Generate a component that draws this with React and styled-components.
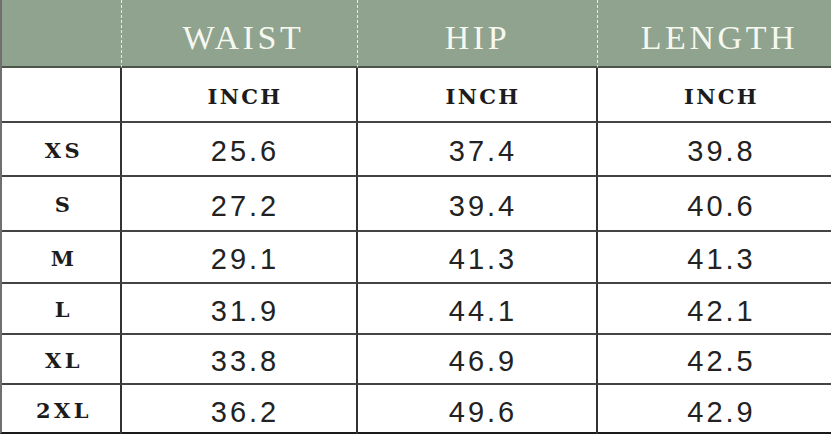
import React from "react";
import styled, { createGlobalStyle } from "styled-components";

const Global = createGlobalStyle`
  html, body { margin: 0; padding: 0; background: #ffffff; }
  body { width: 831px; height: 434px; overflow: hidden; }
`;

const Table = styled.div`
  display: grid;
  grid-template-columns: 120px 236px 240px 235px;
  grid-template-rows: 68px 55px 54px 55px 52px 51px 50px 49px;
  width: 831px;
  height: 434px;
  box-sizing: border-box;
  border-left: 2px solid #707070;
  border-bottom: 2px solid #1a1a1a;
`;

const HeadCell = styled.div`
  background: #8fa38e;
  display: flex;
  align-items: center;
  justify-content: center;
  padding-left: ${(p) => p.$shift || 0}px;
  box-sizing: border-box;
  border-bottom: 2px solid #4a5548;
  border-right: ${(p) => (p.$last ? "none" : "1px dashed rgba(255,255,255,0.8)")};
  color: #f6f8f0;
  font-family: "Liberation Serif", "Times New Roman", serif;
  font-size: 34px;
  letter-spacing: 3.6px;
  padding-top: 10px;
`;

const Cell = styled.div`
  display: flex;
  align-items: center;
  justify-content: center;
  box-sizing: border-box;
  border-right: ${(p) => (p.$last ? "none" : "2px solid #333")};
  border-bottom: ${(p) => (p.$noBottom ? "none" : "2px solid #444")};
  color: #1c1c1c;
`;

const Unit = styled(Cell)`
  font-family: "DejaVu Serif", "Liberation Serif", serif;
  font-weight: bold;
  font-size: 21px;
  letter-spacing: 2.4px;
  padding-top: 3px;
  padding-left: 12px;
`;

const Size = styled(Cell)`
  font-family: "DejaVu Serif", "Liberation Serif", serif;
  font-weight: bold;
  font-size: 21px;
  letter-spacing: 3.5px;
  padding-top: 2px;
  padding-left: 6px;
`;

const Value = styled(Cell)`
  font-family: "Liberation Sans", Arial, sans-serif;
  font-size: 29px;
  letter-spacing: 3px;
  color: #222;
  padding-top: 5px;
  padding-left: 12px;
`;

const rows = [
  ["XS", "25.6", "37.4", "39.8"],
  ["S", "27.2", "39.4", "40.6"],
  ["M", "29.1", "41.3", "41.3"],
  ["L", "31.9", "44.1", "42.1"],
  ["XL", "33.8", "46.9", "42.5"],
  ["2XL", "36.2", "49.6", "42.9"],
];

export default function App() {
  return (
    <>
      <Global />
      <Table>
        <HeadCell />
        <HeadCell $shift={8}>WAIST</HeadCell>
        <HeadCell>HIP</HeadCell>
        <HeadCell $last $shift={8}>LENGTH</HeadCell>

        <Unit />
        <Unit>INCH</Unit>
        <Unit>INCH</Unit>
        <Unit $last>INCH</Unit>

        {rows.map((r, i) => {
          const last = i === rows.length - 1;
          return (
            <React.Fragment key={r[0]}>
              <Size $noBottom={last}>{r[0]}</Size>
              <Value $noBottom={last}>{r[1]}</Value>
              <Value $noBottom={last}>{r[2]}</Value>
              <Value $noBottom={last} $last>{r[3]}</Value>
            </React.Fragment>
          );
        })}
      </Table>
    </>
  );
}
